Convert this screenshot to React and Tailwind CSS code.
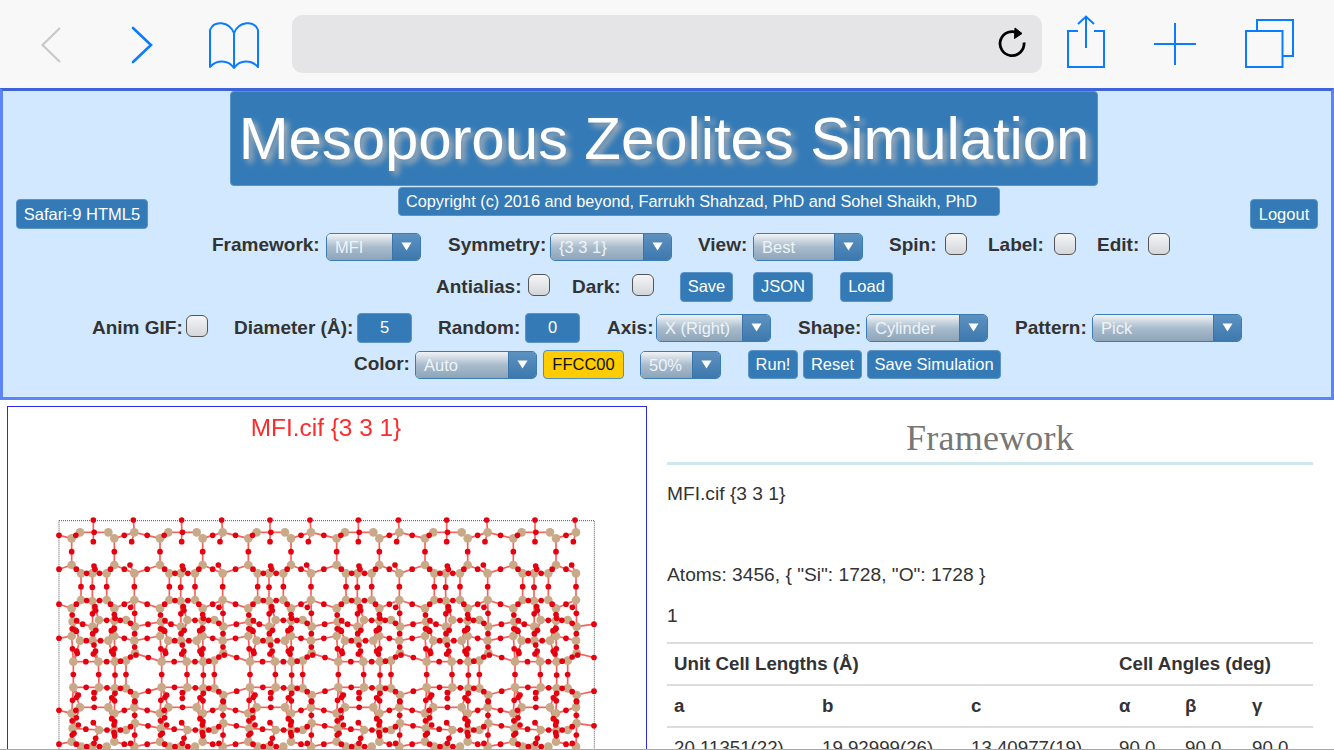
import React from "react";

const rows = [
  { left: true, a: [[215,415],[240,397],[325,397],[343,415],[403,397]] },
  { left: true, a: [[215,495],[243,520],[277,520],[320,520],[343,495],[403,520]] },
  { left: true, a: [[215,625],[243,600],[277,603],[320,600],[343,625],[403,600]] },
  { left: false, a: [[218,665],[278,680],[297,660],[343,662],[378,660],[405,680]] },
  { left: true, a: [[215,708],[240,722],[278,722],[325,722],[343,708],[403,722]] },
  { left: false, a: [[220,785],[295,785],[345,785],[378,782],[405,760]] },
  { left: false, a: [[220,862],[297,862],[345,865],[378,865],[405,885]] },
  { left: true, a: [[215,940],[240,922],[325,922],[343,940],[403,922]] },
  { left: false, a: [[218,985],[297,990],[345,990],[378,990],[405,970]] },
  { left: true, a: [[215,1025],[243,1040],[277,1040],[320,1040],[343,1025],[403,1040]] },
];
const P = 265;
const allSi = rows.flatMap((r) => r.a);
const extraO = [
  [282,498],[285,508],[390,495],[285,620],[392,622],[230,662],[226,690],[345,655],[342,688],
  [282,735],[232,760],[280,762],[340,762],[408,765],[235,885],[282,878],[282,895],[345,880],
  [235,975],[342,975],[280,968],[342,998],[282,1030],[392,1030],[222,1000],[405,905],
];

function buildLattice() {
  const bonds = [];
  const oxy = [];
  const si = [];
  const link = (x1, y1, x2, y2) => {
    bonds.push([x1, y1, x2, y2]);
    oxy.push([(x1 + x2) / 2, (y1 + y2) / 2]);
  };
  for (let t = 0; t < 6; t++) {
    const dx = t * P;
    rows.forEach((r, ri) => {
      r.a.forEach(([x, y], i) => {
        si.push([x + dx, y]);
        const nx = r.a[i + 1];
        if (nx && Math.hypot(nx[0] - x, nx[1] - y) > 30) link(x + dx, y, nx[0] + dx, nx[1]);
        const below = rows[ri + 1];
        if (below) {
          below.a.forEach(([bx, by]) => {
            if (Math.abs(bx - x) <= 22 && Math.hypot(bx - x, by - y) < 92) link(x + dx, y, bx + dx, by);
          });
        }
      });
    });
    [[280,360,280,397],[280,425,280,397],[400,360,403,397],[395,425,403,397]].forEach(([a,b,c,d]) => {
      bonds.push([a + dx, b, c + dx, d]);
      oxy.push([a + dx, b]);
    });
    extraO.forEach(([x, y]) => {
      let best = allSi[0];
      let bd = Infinity;
      allSi.forEach((s) => {
        const d = Math.hypot(s[0] - x, s[1] - y);
        if (d < bd) { bd = d; best = s; }
      });
      bonds.push([x + dx, y, best[0] + dx, best[1]]);
      oxy.push([x + dx, y]);
    });
  }
  rows.forEach((r) => {
    const first = r.a[0], last = r.a[r.a.length - 1];
    for (let t = -1; t < 6; t++) {
      const x1 = last[0] + t * P, x2 = first[0] + (t + 1) * P;
      const my = (last[1] + first[1]) / 2;
      if (t === -1) {
        if (r.left) { oxy.push([177, my]); bonds.push([177, my, x2, first[1]]); }
      } else if (t === 5) {
        if (!r.left) { oxy.push([1782, my]); bonds.push([x1, last[1], 1782, my]); }
      } else {
        link(x1, last[1], x2, first[1]);
      }
    }
  });
  return { bonds, oxy, si };
}

const lattice = buildLattice();

function Lattice() {
  return (
    <svg
      viewBox="24 147 1914 900"
      className="block w-[638px] h-[300px] blur-[0.3px]"
      aria-hidden="true"
    >
      <rect x="177" y="362" width="1606" height="900" fill="none" stroke="#555" strokeWidth="3" strokeDasharray="3 3" />
      {lattice.bonds.map((b, i) => (
        <line key={i} x1={b[0]} y1={b[1]} x2={b[2]} y2={b[3]} stroke="#f9605c" strokeWidth="5" />
      ))}
      {lattice.si.map((a, i) => (
        <circle key={i} cx={a[0]} cy={a[1]} r="13" fill="#c8a988" />
      ))}
      {lattice.oxy.map((a, i) => (
        <circle key={i} cx={a[0]} cy={a[1]} r="8.500" fill="#e4000f" />
      ))}
    </svg>
  );
}

function Btn({ w, children, className = "" }) {
  return (
    <div className={`flex items-center justify-center bg-[#337ab7] border border-[#5b93c7] rounded-[4px] text-white text-[16.5px] whitespace-nowrap ${w} ${className}`}>
      {children}
    </div>
  );
}

function Sel({ w, children, className = "" }) {
  return (
    <div className={`flex h-[28px] border border-[#3b7cb6] rounded-[5px] overflow-hidden ${w} ${className}`}>
      <div className="flex-1 flex items-center pl-[8px] pt-[2px] text-[16.5px] text-[#eef3f8] bg-gradient-to-b from-[#f2f4f6] via-[#a9bccd] to-[#8da4b8] whitespace-nowrap overflow-hidden">
        {children}
      </div>
      <div className="w-[28px] shrink-0 flex items-center justify-center bg-gradient-to-b from-[#5d92c0] to-[#3d78ad] border-l border-[#3b74a8]">
        <svg width="11" height="9" viewBox="0 0 11 9"><path d="M0.5 0.5 H10.5 L5.5 8.5 Z" fill="#fff" /></svg>
      </div>
    </div>
  );
}

function Check({ className = "" }) {
  return (
    <div className={`w-[22px] h-[22px] rounded-[6px] border border-[#555] bg-gradient-to-b from-[#f4f5f6] to-[#d4d6da] ${className}`} />
  );
}

function Lab({ w, children, className = "" }) {
  return <div className={`font-bold text-[19px] text-[#333] whitespace-nowrap ${w} ${className}`}>{children}</div>;
}

function Chrome() {
  return (
    <div className="h-[88px] shrink-0 bg-[#f8f8f8] flex items-start relative">
      <svg width="1334" height="88" viewBox="0 0 1334 88" className="absolute left-0 top-0" fill="none">
        <path d="M60 28 L42.500 45 L60 62" stroke="#c9c9c9" strokeWidth="2.200" />
        <path d="M133 28 L151 45 L133 62" stroke="#0a7cff" strokeWidth="2.600" strokeLinecap="round" />
        <path d="M234 33 C229 21 214 20 210 30 V67 C216 60 228 59 234 68 C240 59 252 60 258 67 V30 C254 20 239 21 234 33 V68" stroke="#0a7cff" strokeWidth="2" strokeLinejoin="round" />
        <path d="M1018.500 33.500 A12 12 0 1 0 1024 42.500" stroke="#000" strokeWidth="2.800" />
        <path d="M1015 28 L1022 33.500 L1014.500 38.500 Z" fill="#000" stroke="#000" strokeWidth="1" />
        <path d="M1078 31 H1068 V67 H1104 V31 H1094" stroke="#0a7cff" strokeWidth="2" />
        <path d="M1086 48 V17 M1078 24 L1086 16.500 L1094 24" stroke="#0a7cff" strokeWidth="2" />
        <path d="M1154 44 H1196 M1175 23 V65" stroke="#0a7cff" strokeWidth="2" />
        <rect x="1246" y="31" width="36.500" height="36" stroke="#0a7cff" strokeWidth="2" />
        <path d="M1257 31 V20 H1293 V56 H1283" stroke="#0a7cff" strokeWidth="2" />
      </svg>
      <div className="ml-[292px] mt-[15px] w-[750px] h-[58px] rounded-[10px] bg-[#e5e5e7]" />
    </div>
  );
}

function Controls() {
  return (
    <div className="h-[312px] shrink-0 bg-[#d2e8ff] border-[3px] border-[#5c85fb] border-t-[#3f63d8] flex flex-col">
      <div className="flex justify-center pr-[6px]">
        <div className="w-[868px] h-[95px] bg-[#337ab7] border border-[#5b93c7] rounded-[4px] text-white text-[60px] tracking-[-0.1px] flex items-center justify-center whitespace-nowrap [text-shadow:4px_4px_6px_#b5b5b5]">
          Mesoporous Zeolites Simulation
        </div>
      </div>
      <div className="h-[39px] flex justify-between items-start px-[13px] pt-[1px]">
        <Btn w="w-[132px]" className="h-[30px] mt-[12px]">Safari-9 HTML5</Btn>
        <Btn w="w-[602px]" className="h-[29px] justify-start! pl-[7px] text-[16.3px]!">Copyright (c) 2016 and beyond, Farrukh Shahzad, PhD and Sohel Shaikh, PhD</Btn>
        <Btn w="w-[68px]" className="h-[30px] mt-[12px]">Logout</Btn>
      </div>
      <div className="h-[41px] flex items-center pl-[209px]">
        <Lab w="w-[108px]">Framework:</Lab>
        <Sel w="w-[95px]" className="ml-[6px] mt-[2px]">MFI</Sel>
        <Lab w="w-[96px]" className="ml-[27px]">Symmetry:</Lab>
        <Sel w="w-[122px]" className="ml-[6px] mt-[2px]">{"{3 3 1}"}</Sel>
        <Lab w="w-[48px]" className="ml-[26px]">View:</Lab>
        <Sel w="w-[110px]" className="ml-[7px] mt-[2px]">Best</Sel>
        <Lab w="w-[46px]" className="ml-[26px]">Spin:</Lab>
        <Check className="ml-[10px] -mt-[4px]" />
        <Lab w="w-[60px]" className="ml-[21px]">Label:</Lab>
        <Check className="ml-[6px] -mt-[4px]" />
        <Lab w="w-[41px]" className="ml-[21px]">Edit:</Lab>
        <Check className="ml-[10px] -mt-[4px]" />
      </div>
      <div className="h-[41px] flex items-center pl-[433px]">
        <Lab w="w-[83px]" className="mt-[2px]">Antialias:</Lab>
        <Check className="ml-[9px] -mt-[4px]" />
        <Lab w="w-[49px]" className="ml-[22px] mt-[2px]">Dark:</Lab>
        <Check className="ml-[11px] -mt-[4px]" />
        <Btn w="w-[53px]" className="h-[30px] ml-[26px]">Save</Btn>
        <Btn w="w-[60px]" className="h-[30px] ml-[20px]">JSON</Btn>
        <Btn w="w-[53px]" className="h-[30px] ml-[27px]">Load</Btn>
      </div>
      <div className="h-[41px] flex items-center pl-[89px]">
        <Lab w="w-[88px]" className="mt-[2px]">Anim GIF:</Lab>
        <Check className="ml-[6px] -mt-[4px]" />
        <Lab w="w-[118px]" className="ml-[26px] mt-[2px]">Diameter (Å):</Lab>
        <Btn w="w-[55px]" className="h-[30px] ml-[5px] border-[#2f6ea6]">5</Btn>
        <Lab w="w-[82px]" className="ml-[26px] mt-[2px]">Random:</Lab>
        <Btn w="w-[55px]" className="h-[30px] ml-[5px] border-[#2f6ea6]">0</Btn>
        <Lab w="w-[43px]" className="ml-[27px] mt-[2px]">Axis:</Lab>
        <Sel w="w-[115px]" className="ml-[6px]">X (Right)</Sel>
        <Lab w="w-[62px]" className="ml-[27px] mt-[2px]">Shape:</Lab>
        <Sel w="w-[122px]" className="ml-[6px]">Cylinder</Sel>
        <Lab w="w-[71px]" className="ml-[27px] mt-[2px]">Pattern:</Lab>
        <Sel w="w-[150px]" className="ml-[6px]">Pick</Sel>
      </div>
      <div className="h-[33px] flex items-center pl-[351px]">
        <Lab w="w-[55px]" className="-mt-[1px]">Color:</Lab>
        <Sel w="w-[122px]" className="ml-[6px]">Auto</Sel>
        <div className="ml-[6px] w-[81px] h-[29px] flex items-center justify-center bg-[#ffcc00] border border-[#4f8fc6] rounded-[4px] text-[#111] text-[16.5px]">FFCC00</div>
        <Sel w="w-[81px]" className="ml-[16px]">50%</Sel>
        <Btn w="w-[50px]" className="h-[29px] ml-[27px]">Run!</Btn>
        <Btn w="w-[59px]" className="h-[29px] ml-[5px]">Reset</Btn>
        <Btn w="w-[134px]" className="h-[29px] ml-[5px]">Save Simulation</Btn>
      </div>
    </div>
  );
}

function ChartBox() {
  return (
    <div className="w-[640px] shrink-0 h-[400px] border border-[#2a2aee] bg-white">
      <div className="h-[42px] flex items-center justify-center pr-[2px] text-[24.4px] text-[#ff2a2a] blur-[0.3px]">MFI.cif {"{3 3 1}"}</div>
      <Lattice />
    </div>
  );
}

function Info() {
  const th = "text-left font-bold px-[7px]";
  const td = "text-left font-normal px-[7px]";
  return (
    <div className="w-[646px] shrink-0 ml-[20px] text-[19.2px] text-[#333]">
      <div className="h-[59px] flex items-end justify-center pb-[4px] border-b-[3px] border-[#cfe8ef] font-['Liberation_Serif',serif] text-[36px] leading-[40px] text-[#777] tracking-[0.2px]">Framework</div>
      <div className="h-[20px] mt-[19px] leading-[20px]">MFI.cif {"{3 3 1}"}</div>
      <div className="h-[20px] mt-[61px] leading-[20px]">Atoms: 3456, {'{ "Si": 1728, "O": 1728 }'}</div>
      <div className="h-[20px] mt-[21px] leading-[20px]">1</div>
      <table className="mt-[16px] w-full table-fixed border-collapse border-t-2 border-[#dddddd] text-[18.7px]">
        <colgroup>
          <col className="w-[148px]" />
          <col className="w-[149px]" />
          <col className="w-[148px]" />
          <col className="w-[66px]" />
          <col className="w-[67px]" />
          <col />
        </colgroup>
        <thead>
          <tr className="h-[42px] border-b-2 border-[#dddddd]">
            <th colSpan={3} className={th}>Unit Cell Lengths (Å)</th>
            <th colSpan={3} className={th}>Cell Angles (deg)</th>
          </tr>
          <tr className="h-[42px] border-b-2 border-[#dddddd]">
            <th className={th}>a</th>
            <th className={th}>b</th>
            <th className={th}>c</th>
            <th className={th}>α</th>
            <th className={th}>β</th>
            <th className={th}>γ</th>
          </tr>
        </thead>
        <tbody>
          <tr className="h-[42px]">
            <td className={td}>20.11351(22)</td>
            <td className={td}>19.92999(26)</td>
            <td className={td}>13.40977(19)</td>
            <td className={td}>90.0</td>
            <td className={td}>90.0</td>
            <td className={td}>90.0</td>
          </tr>
        </tbody>
      </table>
    </div>
  );
}

export default function App() {
  return (
    <div className="w-[1334px] h-[750px] overflow-hidden bg-white flex flex-col font-['Liberation_Sans',Arial,sans-serif]">
      <Chrome />
      <Controls />
      <div className="flex-1 min-h-0 overflow-hidden flex items-start pl-[7px] pt-[6px] border-b border-[#a8a8a8]">
        <ChartBox />
        <Info />
      </div>
    </div>
  );
}
